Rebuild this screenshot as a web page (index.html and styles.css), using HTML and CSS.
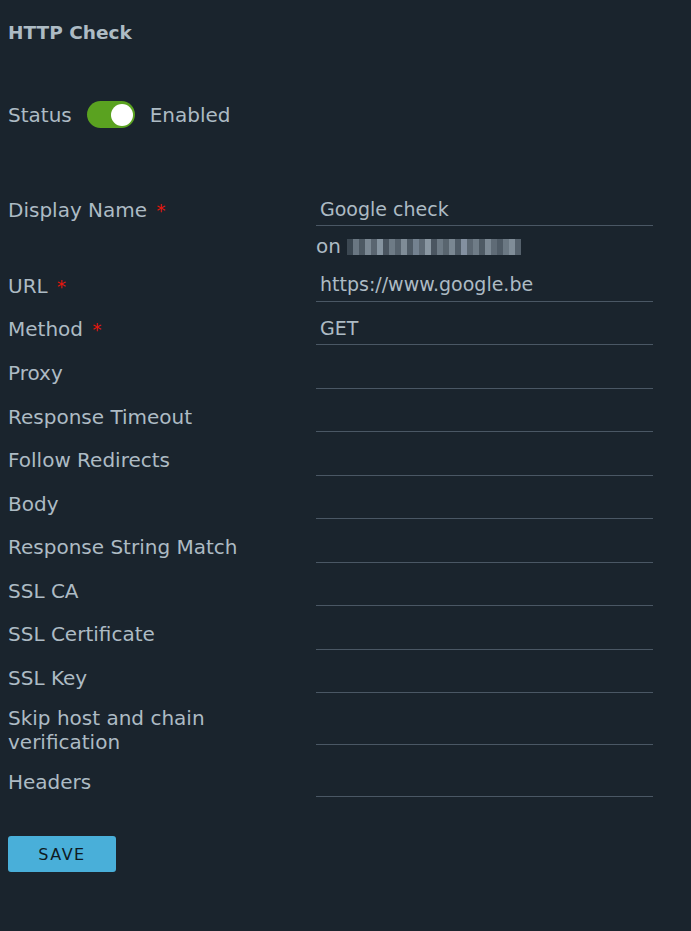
FILE: index.html
```html
<!DOCTYPE html>
<html lang="en">
<head>
<meta charset="utf-8">
<title>HTTP Check</title>
<link rel="stylesheet" href="styles.css">
</head>
<body>
<div class="page">
  <h2 class="title">HTTP Check</h2>

  <div class="status-row">
    <span class="status-label">Status</span>
    <span class="toggle"><span class="knob"></span></span>
    <span class="status-value">Enabled</span>
  </div>

  <form class="form">
    <div class="row">
      <label class="label">Display Name <span class="req">*</span></label>
      <div class="field"><span class="value">Google check</span></div>
    </div>
    <div class="helper">
      <span class="helper-on">on</span>
      <span class="mosaic">
        <i style="background:#3c4852"></i><i style="background:#6a7782"></i><i style="background:#4d5963"></i><i style="background:#7b8893"></i><i style="background:#5a6570"></i><i style="background:#8694a0"></i><i style="background:#4a5560"></i><i style="background:#6e7b86"></i><i style="background:#56626d"></i><i style="background:#7f8c97"></i><i style="background:#4f5b66"></i><i style="background:#748290"></i><i style="background:#5e6a75"></i><i style="background:#8a97a2"></i><i style="background:#4b5661"></i><i style="background:#6d7a85"></i><i style="background:#59656f"></i><i style="background:#7a8792"></i><i style="background:#505c67"></i><i style="background:#8390a0"></i><i style="background:#5b6772"></i><i style="background:#6f7c87"></i><i style="background:#4e5a64"></i><i style="background:#7c8994"></i><i style="background:#5f6b76"></i><i style="background:#4f5b66"></i><i style="background:#6b7883"></i><i style="background:#808d98"></i><i style="background:#55616c"></i>
      </span>
    </div>
    <div class="row">
      <label class="label">URL <span class="req">*</span></label>
      <div class="field"><span class="value">https://www.google.be</span></div>
    </div>
    <div class="row">
      <label class="label">Method <span class="req">*</span></label>
      <div class="field"><span class="value">GET</span></div>
    </div>
    <div class="row">
      <label class="label">Proxy</label>
      <div class="field"></div>
    </div>
    <div class="row">
      <label class="label">Response Timeout</label>
      <div class="field"></div>
    </div>
    <div class="row">
      <label class="label">Follow Redirects</label>
      <div class="field"></div>
    </div>
    <div class="row">
      <label class="label">Body</label>
      <div class="field"></div>
    </div>
    <div class="row">
      <label class="label">Response String Match</label>
      <div class="field"></div>
    </div>
    <div class="row">
      <label class="label">SSL CA</label>
      <div class="field"></div>
    </div>
    <div class="row">
      <label class="label">SSL Certificate</label>
      <div class="field"></div>
    </div>
    <div class="row">
      <label class="label">SSL Key</label>
      <div class="field"></div>
    </div>
    <div class="row">
      <label class="label wrap">Skip host and chain verification</label>
      <div class="field"></div>
    </div>
    <div class="row">
      <label class="label">Headers</label>
      <div class="field"></div>
    </div>

    <button type="button" class="save">SAVE</button>
  </form>
</div>
</body>
</html>
```
FILE: styles.css
```css
html, body {
  margin: 0;
  padding: 0;
  background: #1a242d;
}

body {
  font-family: "DejaVu Sans", "Open Sans", sans-serif;
  color: #adbbc4;
  font-size: 20px;
  line-height: 24px;
}

.page {
  padding: 21px 8px 40px 8px;
}

.title {
  margin: 0;
  font-size: 18.5px;
  line-height: 24px;
  font-weight: 700;
  color: #adbbc4;
}

.status-row {
  display: flex;
  align-items: center;
  margin-top: 56px;
  height: 27px;
}

.status-label {
  margin-right: 15px;
}

.toggle {
  width: 48px;
  height: 27px;
  border-radius: 14px;
  background: #5aa220;
  display: flex;
  align-items: center;
  justify-content: flex-end;
  padding: 0 2px;
  box-sizing: border-box;
  margin-right: 15px;
}

.knob {
  width: 22px;
  height: 22px;
  border-radius: 50%;
  background: #ffffff;
}

.form {
  margin-top: 67px;
}

.row {
  display: grid;
  grid-template-columns: 308px 337px;
  align-items: center;
  margin-top: 12.5px;
}

.row:first-child {
  margin-top: 0;
}

.label {
  display: block;
  line-height: 24px;
}

.label.wrap {
  max-width: 230px;
}

.req {
  color: #e8160c;
  margin-left: 3px;
  font-size: 18px;
}

.field {
  height: 31px;
  box-sizing: border-box;
  border-bottom: 1px solid #4a5764;
  padding: 0 4px;
  display: flex;
  align-items: center;
}

.value {
  line-height: 24px;
  font-size: 19px;
  margin-top: -3px;
}

.helper {
  margin-left: 308px;
  margin-top: 8.3px;
  height: 24px;
  display: flex;
  align-items: center;
}

.helper-on {
  margin-right: 6px;
}

.mosaic {
  display: flex;
  height: 16px;
  margin-top: 1px;
}

.mosaic i {
  display: block;
  width: 6px;
  height: 16px;
}

.save {
  display: block;
  margin-top: 39px;
  width: 108px;
  height: 36px;
  border: none;
  border-radius: 3px;
  background: #49afd9;
  color: #0f1a22;
  font-family: "DejaVu Sans", "Open Sans", sans-serif;
  font-size: 16px;
  letter-spacing: 1.5px;
  padding: 0;
}
```
